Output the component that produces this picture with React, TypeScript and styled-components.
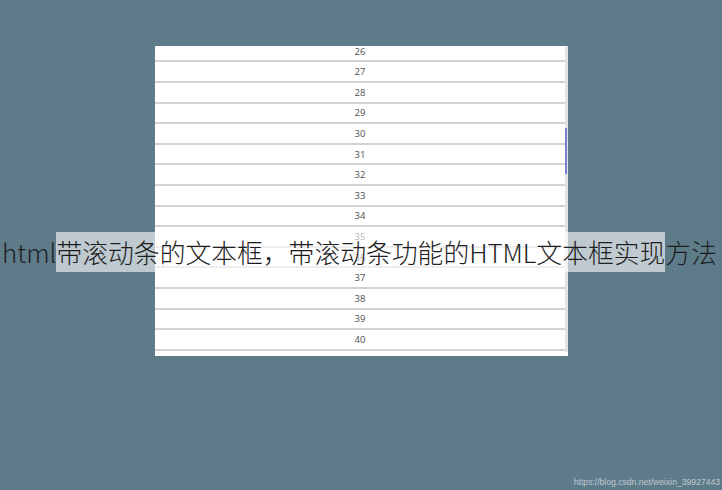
import React, { useLayoutEffect, useRef } from 'react';
import styled, { createGlobalStyle } from 'styled-components';

const GlobalStyle = createGlobalStyle`
  html, body {
    margin: 0;
    padding: 0;
    background: #5e7b8a;
  }
  #root {
    min-height: 490px;
  }
`;

const Page = styled.div`
  position: relative;
  width: 722px;
  height: 490px;
  padding: 46px 0 0 155px;
  box-sizing: border-box;
  overflow: hidden;
  background: #5e7b8a;
`;

// white frame: scrolling list on the left, slim scrollbar on the right
const Frame = styled.div`
  display: flex;
  width: 413px;
  height: 310px;
  background: #fff;
`;

const ListBox = styled.div`
  flex: 1;
  height: 306px;
  overflow-y: scroll;
  overflow-x: hidden;
  scrollbar-width: none;

  &::-webkit-scrollbar {
    display: none;
  }
`;

const Track = styled.div`
  display: flex;
  flex-direction: column;
  width: 3px;
  height: 306px;
  background: #e4e4e4;
`;

const Thumb = styled.div<{ $offset: number; $size: number }>`
  margin-top: ${(p) => p.$offset}px;
  width: 2px;
  height: ${(p) => p.$size}px;
  background: #7a7fd6;
`;

const List = styled.ul`
  list-style: none;
  margin: 0;
  padding: 32px 0 0;
`;

const Row = styled.li`
  height: 18.6px;
  border-bottom: 2px solid #d2d2d2;
  display: flex;
  align-items: center;
  justify-content: center;
  font-family: 'Open Sans', 'Liberation Sans', sans-serif;
  font-size: 9.5px;
  color: #4d4d4d;
`;

const Title = styled.h1`
  position: absolute;
  top: 232px;
  left: 2px;
  margin: 0;
  line-height: 40px;
  white-space: nowrap;
  font-family: 'Noto Sans CJK SC', 'Noto Sans', sans-serif;
  font-weight: 300;
  font-size: 25.8px;
  color: #1e1e1e;
`;

const Highlight = styled.span`
  display: inline-block;
  height: 40px;
  background: rgba(255, 255, 255, 0.6);
`;

const Watermark = styled.span`
  position: absolute;
  right: 2px;
  bottom: 3px;
  font-family: 'Liberation Sans', Arial, sans-serif;
  font-size: 8.6px;
  color: rgba(255, 255, 255, 0.6);
`;

const rows = Array.from({ length: 100 }, (_, i) => i + 1);
const SCROLL_TOP = 551;

export default function App() {
  const boxRef = useRef<HTMLDivElement>(null);

  useLayoutEffect(() => {
    if (boxRef.current) boxRef.current.scrollTop = SCROLL_TOP;
  }, []);

  return (
    <>
      <GlobalStyle />
      <Page>
        <Frame>
          <ListBox ref={boxRef}>
            <List>
              {rows.map((n) => (
                <Row key={n}>{n}</Row>
              ))}
            </List>
          </ListBox>
          <Track>
            <Thumb $offset={82} $size={46} />
          </Track>
        </Frame>
        <Title>
          html<Highlight>带滚动条的文本框，带滚动条功能的HTML文本框实现</Highlight>方法
        </Title>
        <Watermark>https://blog.csdn.net/weixin_39927443</Watermark>
      </Page>
    </>
  );
}
